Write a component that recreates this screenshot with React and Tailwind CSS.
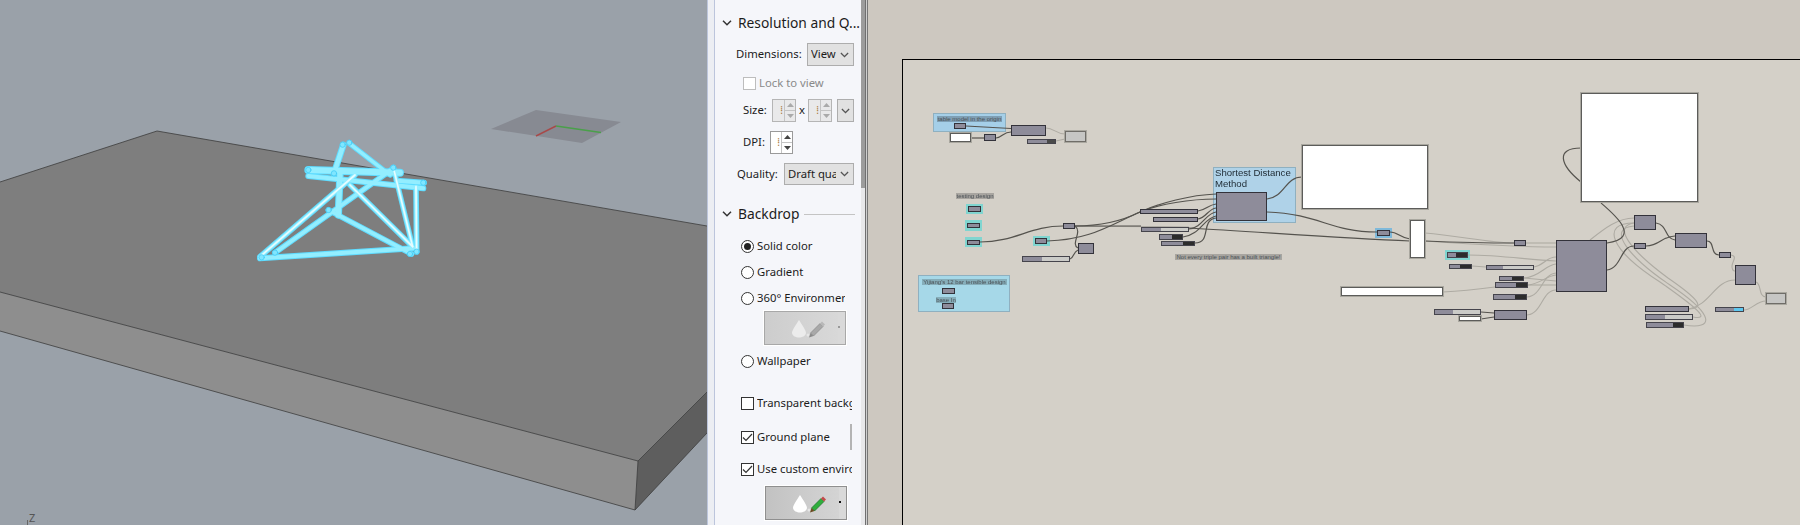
import React from "react";

const ui = { fontFamily: '"Noto Sans", "Open Sans", sans-serif' };

/* ---------- 3D viewport ---------- */
const struts = [
  [358, 40, 480, 135, 13],
  [490, 112, 548, 350, 13],
  [340, 45, 312, 130, 17],
  [330, 130, 325, 255, 19],
  [135, 368, 490, 115, 14],
  [90, 380, 375, 135, 14],
  [90, 385, 550, 355, 15],
  [295, 240, 545, 372, 14],
  [360, 165, 548, 350, 14],
  [558, 170, 560, 365, 14],
  [235, 120, 510, 128, 21],
  [235, 138, 580, 175, 15],
  [500, 152, 582, 158, 15],
];
const joints = [
  [338, 44], [358, 38], [312, 130], [235, 120], [490, 113], [580, 158], [135, 368], [540, 372], [560, 365], [296, 240], [95, 382],
];

function Viewport() {
  return (
    <div className="relative h-full w-[707px] shrink-0 bg-[#9aa1a9]">
      <svg className="block" width="707" height="525" viewBox="0 0 707 525">
        <polygon points="0,292 638,461 635,510 0,331" fill="#8e8e8e" />
        <polygon points="638,461 707,392 707,433 635,510" fill="#5e5e5e" />
        <polygon points="0,182 157,131 707,226 707,392 638,461 0,292" fill="#7e7e7e" />
        <path
          d="M0 182 L157 131 L707 226 M0 292 L638 461 L707 392 M638 461 L635 510 L707 433 M0 331 L635 510"
          fill="none"
          stroke="#3c3c3c"
          strokeWidth="0.8"
        />
        <polygon points="536,110 621,122 582,143 491,129" fill="#878a92" />
        <line x1="556" y1="126" x2="536" y2="136" stroke="#a84a4a" strokeWidth="1.5" />
        <line x1="556" y1="126" x2="601" y2="132.5" stroke="#4aa04a" strokeWidth="1.5" />
        <g transform="translate(230 130) scale(0.3333)" strokeLinecap="round">
          {struts.map(([a, b, c, d, w], i) => (
            <line key={"o" + i} x1={a} y1={b} x2={c} y2={d} stroke="#5fdcff" strokeWidth={w + 3} />
          ))}
          {struts.map(([a, b, c, d, w], i) => (
            <line key={"m" + i} x1={a} y1={b} x2={c} y2={d} stroke="#93eeff" strokeWidth={w - 3} />
          ))}
          {struts.map(([a, b, c, d, w], i) =>
            i === 5 || i === 8 || i === 9 || i === 1 ? (
              <line key={"w" + i} x1={a} y1={b} x2={c} y2={d} stroke="#e6fdff" strokeWidth="5" />
            ) : null
          )}
          {joints.map(([x, y], i) => (
            <circle key={i} cx={x} cy={y} r="8" fill="#7fe6ff" stroke="#45cdf5" strokeWidth="2.5" />
          ))}
        </g>
        <line x1="27.5" y1="520" x2="27.5" y2="525" stroke="#666" strokeWidth="1" />
      </svg>
      <span className="absolute left-[29px] top-[511px] text-[11px] leading-[13px] text-[#555]" style={ui}>Z</span>
    </div>
  );
}

/* ---------- Panel controls ---------- */
function Chevron({ color = "#444", size = 10 }) {
  return (
    <svg width={size} height="6" viewBox="0 0 10 6" className="shrink-0">
      <path d="M1 0.8 L5 4.8 L9 0.8" fill="none" stroke={color} strokeWidth="1.5" />
    </svg>
  );
}

function SectionHead({ children, mt, line }) {
  return (
    <div className={`flex h-[22px] w-[140px] items-center whitespace-nowrap pl-[7px] ${mt}`}>
      <Chevron color="#333" />
      <span className="ml-[6px] text-[13.8px] text-[#1c1c1c]">{children}</span>
      {line && <div className="ml-[5px] h-px flex-1 bg-[#c4c4c4]" />}
    </div>
  );
}

function Select({ text, w }) {
  return (
    <div className={`flex h-full items-center border border-[#adadad] bg-[#e1e1e1] ${w}`}>
      <span className="ml-[3px] flex-1 overflow-hidden whitespace-nowrap text-[11.3px] text-[#1c1c1c]">{text}</span>
      <span className="mx-[4px]"><Chevron color="#555" size={9} /></span>
    </div>
  );
}

function Spinner({ w, white, arrow }) {
  return (
    <div className={`flex h-[23px] ${w} border ${white ? "border-[#9a9a9a] bg-white" : "border-[#b5b5b5] bg-[#e9e9ea]"}`}>
      <div className="flex flex-1 items-center justify-end overflow-hidden pr-[1px] text-[10px] text-[#a87a3a]">⁞</div>
      <div className="flex w-[11px] flex-col border-l border-[#c4c4c4]">
        <div className="flex flex-1 items-center justify-center border-b border-[#c4c4c4]">
          <svg width="7" height="4" viewBox="0 0 7 4"><polygon points="3.5,0 7,4 0,4" fill={arrow} /></svg>
        </div>
        <div className="flex flex-1 items-center justify-center">
          <svg width="7" height="4" viewBox="0 0 7 4"><polygon points="0,0 7,0 3.5,4" fill={arrow} /></svg>
        </div>
      </div>
    </div>
  );
}

function Radio({ label, checked, mt }) {
  return (
    <div className={`flex h-[14px] w-[130px] items-center overflow-hidden whitespace-nowrap pl-[26px] ${mt}`}>
      <div className="flex h-[13px] w-[13px] shrink-0 items-center justify-center rounded-full border border-[#333] bg-white">
        {checked && <div className="h-[7px] w-[7px] rounded-full bg-[#222]" />}
      </div>
      <span className="ml-[3px] text-[11.3px] text-[#1c1c1c]">{label}</span>
    </div>
  );
}

function Check({ label, checked, mt, extra }) {
  return (
    <div className={`flex h-[14px] w-[137px] items-center whitespace-nowrap pl-[26px] ${mt}`}>
      <div className="flex h-[13px] w-[13px] shrink-0 items-center justify-center border border-[#333] bg-white">
        {checked && (
          <svg width="11" height="9" viewBox="0 0 11 9"><path d="M1 4.5 L4 7.5 L10 1" fill="none" stroke="#333" strokeWidth="1.2" /></svg>
        )}
      </div>
      <span className="ml-[3px] overflow-hidden text-[11.3px] text-[#1c1c1c]">{label}</span>
      {extra}
    </div>
  );
}

function EnvButton({ active, mt, ml }) {
  const id = active ? "envA" : "envB";
  return (
    <div className={`h-[36px] w-[84px] border border-white ${mt} ${ml}`}>
      <svg className="block" width="82" height="34" viewBox="0 0 82 34">
        <defs>
          <linearGradient id={id} x1="0" y1="0" x2="1" y2="0">
            <stop offset="0" stopColor={active ? "#c2c2c2" : "#cdcdcd"} />
            <stop offset="1" stopColor={active ? "#d4d4d4" : "#d8d8d8"} />
          </linearGradient>
        </defs>
        <rect x="0.5" y="0.5" width="81" height="33" fill="#d9d9d9" stroke={active ? "#8f8f8f" : "#a8a8a8"} />
        <rect x="1" y="1" width="73" height="32" fill={`url(#${id})`} />
        <path d="M35 9 C32 14 28 19 28 22 C29 28 41 28 42 22 C42 19 38 14 35 9 Z" fill={active ? "#ffffff" : "#ececec"} />
        <circle cx="44" cy="24" r="1.5" fill="#e6e6e6" />
        <path d="M46.5 22 L49.5 25 L59 15.5 L56 12.5 Z" fill={active ? "#2fae3c" : "#a8a8a8"} stroke={active ? "#1d6e2c" : "#8a8a8a"} strokeWidth="0.7" />
        <path d="M56 12.5 L58 10.5 L61 13.5 L59 15.5 Z" fill={active ? "#c24a4a" : "#b8b8b8"} />
        <path d="M46.5 22 L45 26.5 L49.5 25 Z" fill={active ? "#6b4a20" : "#8a8a8a"} />
        <rect x="74" y="15" width="2" height="2" fill={active ? "#111" : "#999"} />
      </svg>
    </div>
  );
}

function Panel() {
  return (
    <div className="h-full w-[146px] shrink-0 overflow-hidden bg-[#f5f6fa]" style={ui}>
      <SectionHead mt="mt-[12px]">Resolution and Q...</SectionHead>

      <div className="mt-[9px] flex h-[23px] items-center pl-[21px]">
        <span className="w-[71px] text-[11.3px] text-[#1c1c1c]">Dimensions:</span>
        <Select text="View" w="w-[47px]" />
      </div>

      <div className="mt-[10px] flex h-[14px] items-center pl-[28px]">
        <div className="h-[13px] w-[13px] border border-[#bdbdbd] bg-white" />
        <span className="ml-[3px] text-[11.3px] text-[#8a8a8a]">Lock to view</span>
      </div>

      <div className="mt-[9px] flex h-[23px] items-center pl-[28px]">
        <span className="w-[29px] text-[11.3px] text-[#1c1c1c]">Size:</span>
        <Spinner w="w-[24px]" arrow="#aaaaaa" />
        <span className="w-[12px] text-center text-[11.3px] text-[#1c1c1c]">x</span>
        <Spinner w="w-[24px]" arrow="#aaaaaa" />
        <div className="ml-[5px] flex h-full w-[17px] items-center justify-center border border-[#adadad] bg-[#e1e1e1]">
          <Chevron color="#555" size={9} />
        </div>
      </div>

      <div className="mt-[9px] flex h-[23px] items-center pl-[28px]">
        <span className="w-[27px] text-[11.3px] text-[#1c1c1c]">DPI:</span>
        <Spinner w="w-[23px]" white arrow="#444444" />
      </div>

      <div className="mt-[9px] flex h-[22px] items-center pl-[22px]">
        <span className="w-[47px] text-[11.3px] text-[#1c1c1c]">Quality:</span>
        <Select text="Draft quality" w="w-[70px]" />
      </div>

      <SectionHead mt="mt-[18px]" line>Backdrop</SectionHead>

      <Radio label="Solid color" checked mt="mt-[14px]" />
      <Radio label="Gradient" mt="mt-[12px]" />
      <Radio label="360° Environment" mt="mt-[12px]" />
      <EnvButton mt="mt-[5px]" ml="ml-[48px]" />
      <Radio label="Wallpaper" mt="mt-[8px]" />
      <Check label="Transparent background" mt="mt-[28px]" />
      <Check
        label="Ground plane"
        checked
        mt="mt-[20px]"
        extra={<div className="-my-[6px] ml-auto h-[26px] w-[2px] shrink-0 bg-[#b4b4b4]" />}
      />
      <Check label="Use custom environment" checked mt="mt-[18px]" />
      <EnvButton active mt="mt-[9px]" ml="ml-[49px]" />
    </div>
  );
}

/* ---------- Grasshopper canvas ---------- */
// [x1, y1, x2, y2]
const plain = [
  [954, 123, 966, 129], [984, 134, 996, 141], [1011, 125, 1046, 136],
  [968, 206, 981, 212], [967, 223, 980, 228], [967, 240, 980, 245], [1035, 238, 1047, 244],
  [1063, 223, 1075, 229], [1078, 243, 1094, 254], [942, 288, 955, 294], [942, 303, 954, 309],
  [1140, 209, 1198, 214], [1153, 217, 1198, 222], [1216, 192, 1267, 221], [1377, 230, 1390, 236],
  [1634, 215, 1656, 230], [1675, 233, 1707, 248], [1634, 243, 1646, 249], [1719, 252, 1731, 258],
  [1735, 265, 1756, 285], [1556, 240, 1607, 292], [1514, 240, 1526, 246], [1494, 310, 1527, 320],
  [1645, 306, 1689, 312],
];
// [x1, y1, x2, y2, split, kind]
const sliders = [
  [1027, 139, 1056, 144, 1047, "m"], [1022, 256, 1070, 262, 1042, "l"],
  [1141, 227, 1189, 232, 1161, "l"], [1159, 234, 1183, 240, 1172, "d"], [1161, 241, 1195, 246, 1183, "d"],
  [1447, 252, 1468, 258, 1456, "d"], [1449, 264, 1472, 269, 1460, "d"], [1486, 265, 1534, 270, 1503, "l"],
  [1499, 276, 1524, 281, 1512, "d"], [1495, 282, 1528, 288, 1516, "d"], [1493, 294, 1527, 300, 1515, "d"],
  [1434, 309, 1481, 315, 1453, "l"], [1645, 314, 1693, 320, 1665, "l"], [1646, 322, 1684, 328, 1673, "d"],
  [1715, 307, 1744, 312, 1734, "b"],
];
const whites = [
  [950, 133, 971, 142], [1302, 145, 1428, 209], [1410, 220, 1425, 258], [1341, 287, 1443, 296],
  [1581, 93, 1698, 202], [1459, 316, 1481, 321],
];
const greys = [[1065, 131, 1086, 142], [1766, 293, 1786, 304]];
const halos = [
  [966, 204, 983, 214], [965, 220, 982, 231], [965, 237, 982, 247], [1033, 236, 1050, 246], [1445, 250, 1470, 260],
];
const groups = [
  [933, 113, 1006, 132, "#a5cfe8"], [918, 275, 1010, 312, "#a6d8e8"], [1213, 167, 1296, 223, "#afd2e8"],
];
const notes = [
  [937, 116, 65, "table model in the origin", "#7f9fb4"],
  [956, 193, 38, "testing design", "#a8a5a0"],
  [922, 279, 85, "Yijiang's 12 bar tensible design", "#86aeba"],
  [936, 297, 20, "base In", "#86aeba"],
  [1175, 254, 107, "Not every triple pair has a built triangle!", "#a8a5a0"],
];
const darkWires = [
  "M966 126 L1011 128.5",
  "M971 138 L984 138",
  "M996 138 C1003 137 1003 132 1011 132",
  "M980 242 C1015 242 1030 226 1063 226",
  "M1047 241 C1090 240 1110 225 1140 212 C1160 203 1190 195 1216 194",
  "M1075 226 C1100 226 1120 222 1140 212 C1160 204 1190 199 1216 199",
  "M1075 226 C1092 226 1125 226 1141 226 M1189 228 C1260 232 1340 238 1410 241",
  "M1075 226 C1083 232 1070 244 1078 248",
  "M1070 259 C1074 258 1073 252 1078 250",
  "M1198 211 C1206 210 1208 205 1216 204",
  "M1198 219 C1206 218 1208 209 1216 208",
  "M1189 229 C1202 228 1206 213 1216 212",
  "M1183 237 C1200 235 1204 218 1216 216",
  "M1195 243 C1212 243 1200 220 1216 218",
  "M1267 199 C1285 197 1285 177 1302 177",
  "M1267 212 C1320 214 1330 232 1377 232",
  "M1390 232 C1398 232 1400 238 1410 239",
  "M1425 241 C1450 242 1490 243 1514 243",
  "M1481 312 L1494 313",
  "M1481 319 L1494 317",
  "M1601 203 C1615 215 1642 238 1607 243",
  "M1581 148 C1555 148 1560 165 1581 182",
  "M1607 270 C1622 268 1620 246 1634 246",
  "M1646 246 C1660 246 1662 236 1675 236",
  "M1656 223 C1668 225 1664 238 1675 240",
  "M1707 241 C1715 241 1710 255 1719 255",
];
const lightWires = [
  "M1046 128 C1054 128 1056 134 1065 134",
  "M1056 141 L1065 139",
  "M1063 226 C1100 227 1130 226 1189 227",
  "M1425 233 C1460 236 1490 243 1514 243",
  "M1526 243 L1556 243",
  "M1425 241 C1470 244 1520 247 1556 247",
  "M1468 255 C1500 255 1530 260 1556 261",
  "M1472 266 L1486 267",
  "M1534 267 C1545 265 1546 257 1556 257",
  "M1524 278 C1540 277 1545 265 1556 264",
  "M1524 278 C1535 279 1545 280 1556 281",
  "M1528 285 C1540 284 1546 276 1556 275",
  "M1528 285 L1556 285",
  "M1443 292 C1465 291 1480 289 1495 287",
  "M1527 297 C1542 296 1542 274 1556 273",
  "M1527 315 C1542 314 1542 290 1556 290",
  "M1590 240 C1605 228 1618 218 1634 218",
  "M1634 223 C1600 223 1610 250 1660 282 C1700 310 1710 320 1693 317",
  "M1634 226 C1605 228 1630 258 1670 285 C1715 315 1715 330 1684 325",
  "M1634 223 C1612 226 1630 250 1668 278 C1700 300 1705 308 1689 309",
  "M1689 309 C1710 305 1715 280 1735 280",
  "M1731 255 C1738 256 1732 262 1732 266 C1732 270 1733 271 1735 271",
  "M1756 282 C1762 284 1758 297 1766 297",
  "M1744 310 C1752 310 1756 301 1766 301",
];

const box = (x1, y1, x2, y2) => ({ left: x1 - 903, top: y1 - 60, width: x2 - x1, height: y2 - y1 });

function Canvas() {
  return (
    <div className="h-full flex-1 bg-[#cdc8c0] pl-[34px] pt-[59px]">
      <div className="relative h-[466px] w-[898px] overflow-hidden border-l border-t border-black bg-[#d4d0c8]">
        <div className="absolute left-0 top-0 h-[466px] w-[898px] blur-[0.5px]">
          {groups.map(([a, b, c, d, bg], i) => (
            <div key={i} className="absolute border border-[#8fb0c0]" style={{ ...box(a, b, c, d), background: bg }} />
          ))}
          {halos.map(([a, b, c, d], i) => (
            <div key={i} className="absolute bg-[#80d5d0]" style={box(a, b, c, d)} />
          ))}
          <div className="absolute bg-[#7fb9da]" style={box(1375, 228, 1392, 238)} />

          <svg className="absolute left-0 top-0" width="897" height="465" viewBox="903 60 897 465" fill="none">
            {lightWires.map((d, i) => <path key={i} d={d} stroke="#aeaba3" strokeWidth="1.1" />)}
            {darkWires.map((d, i) => <path key={i} d={d} stroke="#55534e" strokeWidth="1.2" />)}
          </svg>

          {whites.map(([a, b, c, d], i) => (
            <div
              key={i}
              className="absolute border border-[#5c5c5a] bg-white shadow-[0_0_0_1px_#a9a79f]"
              style={box(a, b, c, d)}
            />
          ))}
          {greys.map(([a, b, c, d], i) => (
            <div
              key={i}
              className="absolute border border-[#6f6d68] bg-[#c6c6c4] shadow-[0_0_0_1px_#aaa8a0]"
              style={box(a, b, c, d)}
            />
          ))}
          {plain.map(([a, b, c, d], i) => (
            <div key={i} className="absolute border border-[#33323a] bg-[#8e8c9a]" style={box(a, b, c, d)} />
          ))}
          {sliders.map(([a, b, c, d, s, k], i) => (
            <div key={i} className="absolute flex border border-[#45444c]" style={box(a, b, c, d)}>
              <div className="h-full shrink-0 bg-[#8e8c9a]" style={{ width: s - a - 1 }} />
              <div
                className={`h-full flex-1 ${
                  k === "l" ? "bg-[#cbcbc8]" : k === "d" ? "bg-[#2c2c2c]" : k === "b" ? "bg-[#5ec8f0]" : "bg-[#4a4a4a]"
                }`}
              />
            </div>
          ))}

          {notes.map(([x, y, w, t, bg], i) => (
            <div
              key={i}
              className="absolute h-[6px] whitespace-nowrap text-center font-['Liberation_Sans'] text-[6px] leading-[6px] text-[#4a5055]"
              style={{ left: x - 903, top: y - 60, width: w, background: bg }}
            >
              {t}
            </div>
          ))}
        </div>

        <div
          className="absolute font-['Liberation_Sans'] text-[9.6px] leading-[10.7px] text-[#1e2a33]"
          style={{ left: 1215 - 903, top: 168 - 60, width: 80 }}
        >
          Shortest Distance
          <br />
          Method
        </div>
      </div>
    </div>
  );
}

export default function App() {
  return (
    <div className="flex h-[525px] w-[1800px] overflow-hidden bg-[#cdc8c0]">
      <Viewport />
      <div className="h-full w-[8px] shrink-0 border-x border-[#bcc5dc] bg-[#eceef3]" />
      <Panel />
      <div className="flex h-full w-[7px] shrink-0">
        <div className="flex h-full w-[4px] flex-col bg-[#e8e8ea]">
          <div className="h-[188px] bg-[#9c9c9c]" />
        </div>
        <div className="h-full w-[1px] bg-[#707070]" />
        <div className="h-full w-[1px] bg-[#cfcfcf]" />
        <div className="h-full w-[1px] bg-[#777]" />
      </div>
      <Canvas />
    </div>
  );
}
